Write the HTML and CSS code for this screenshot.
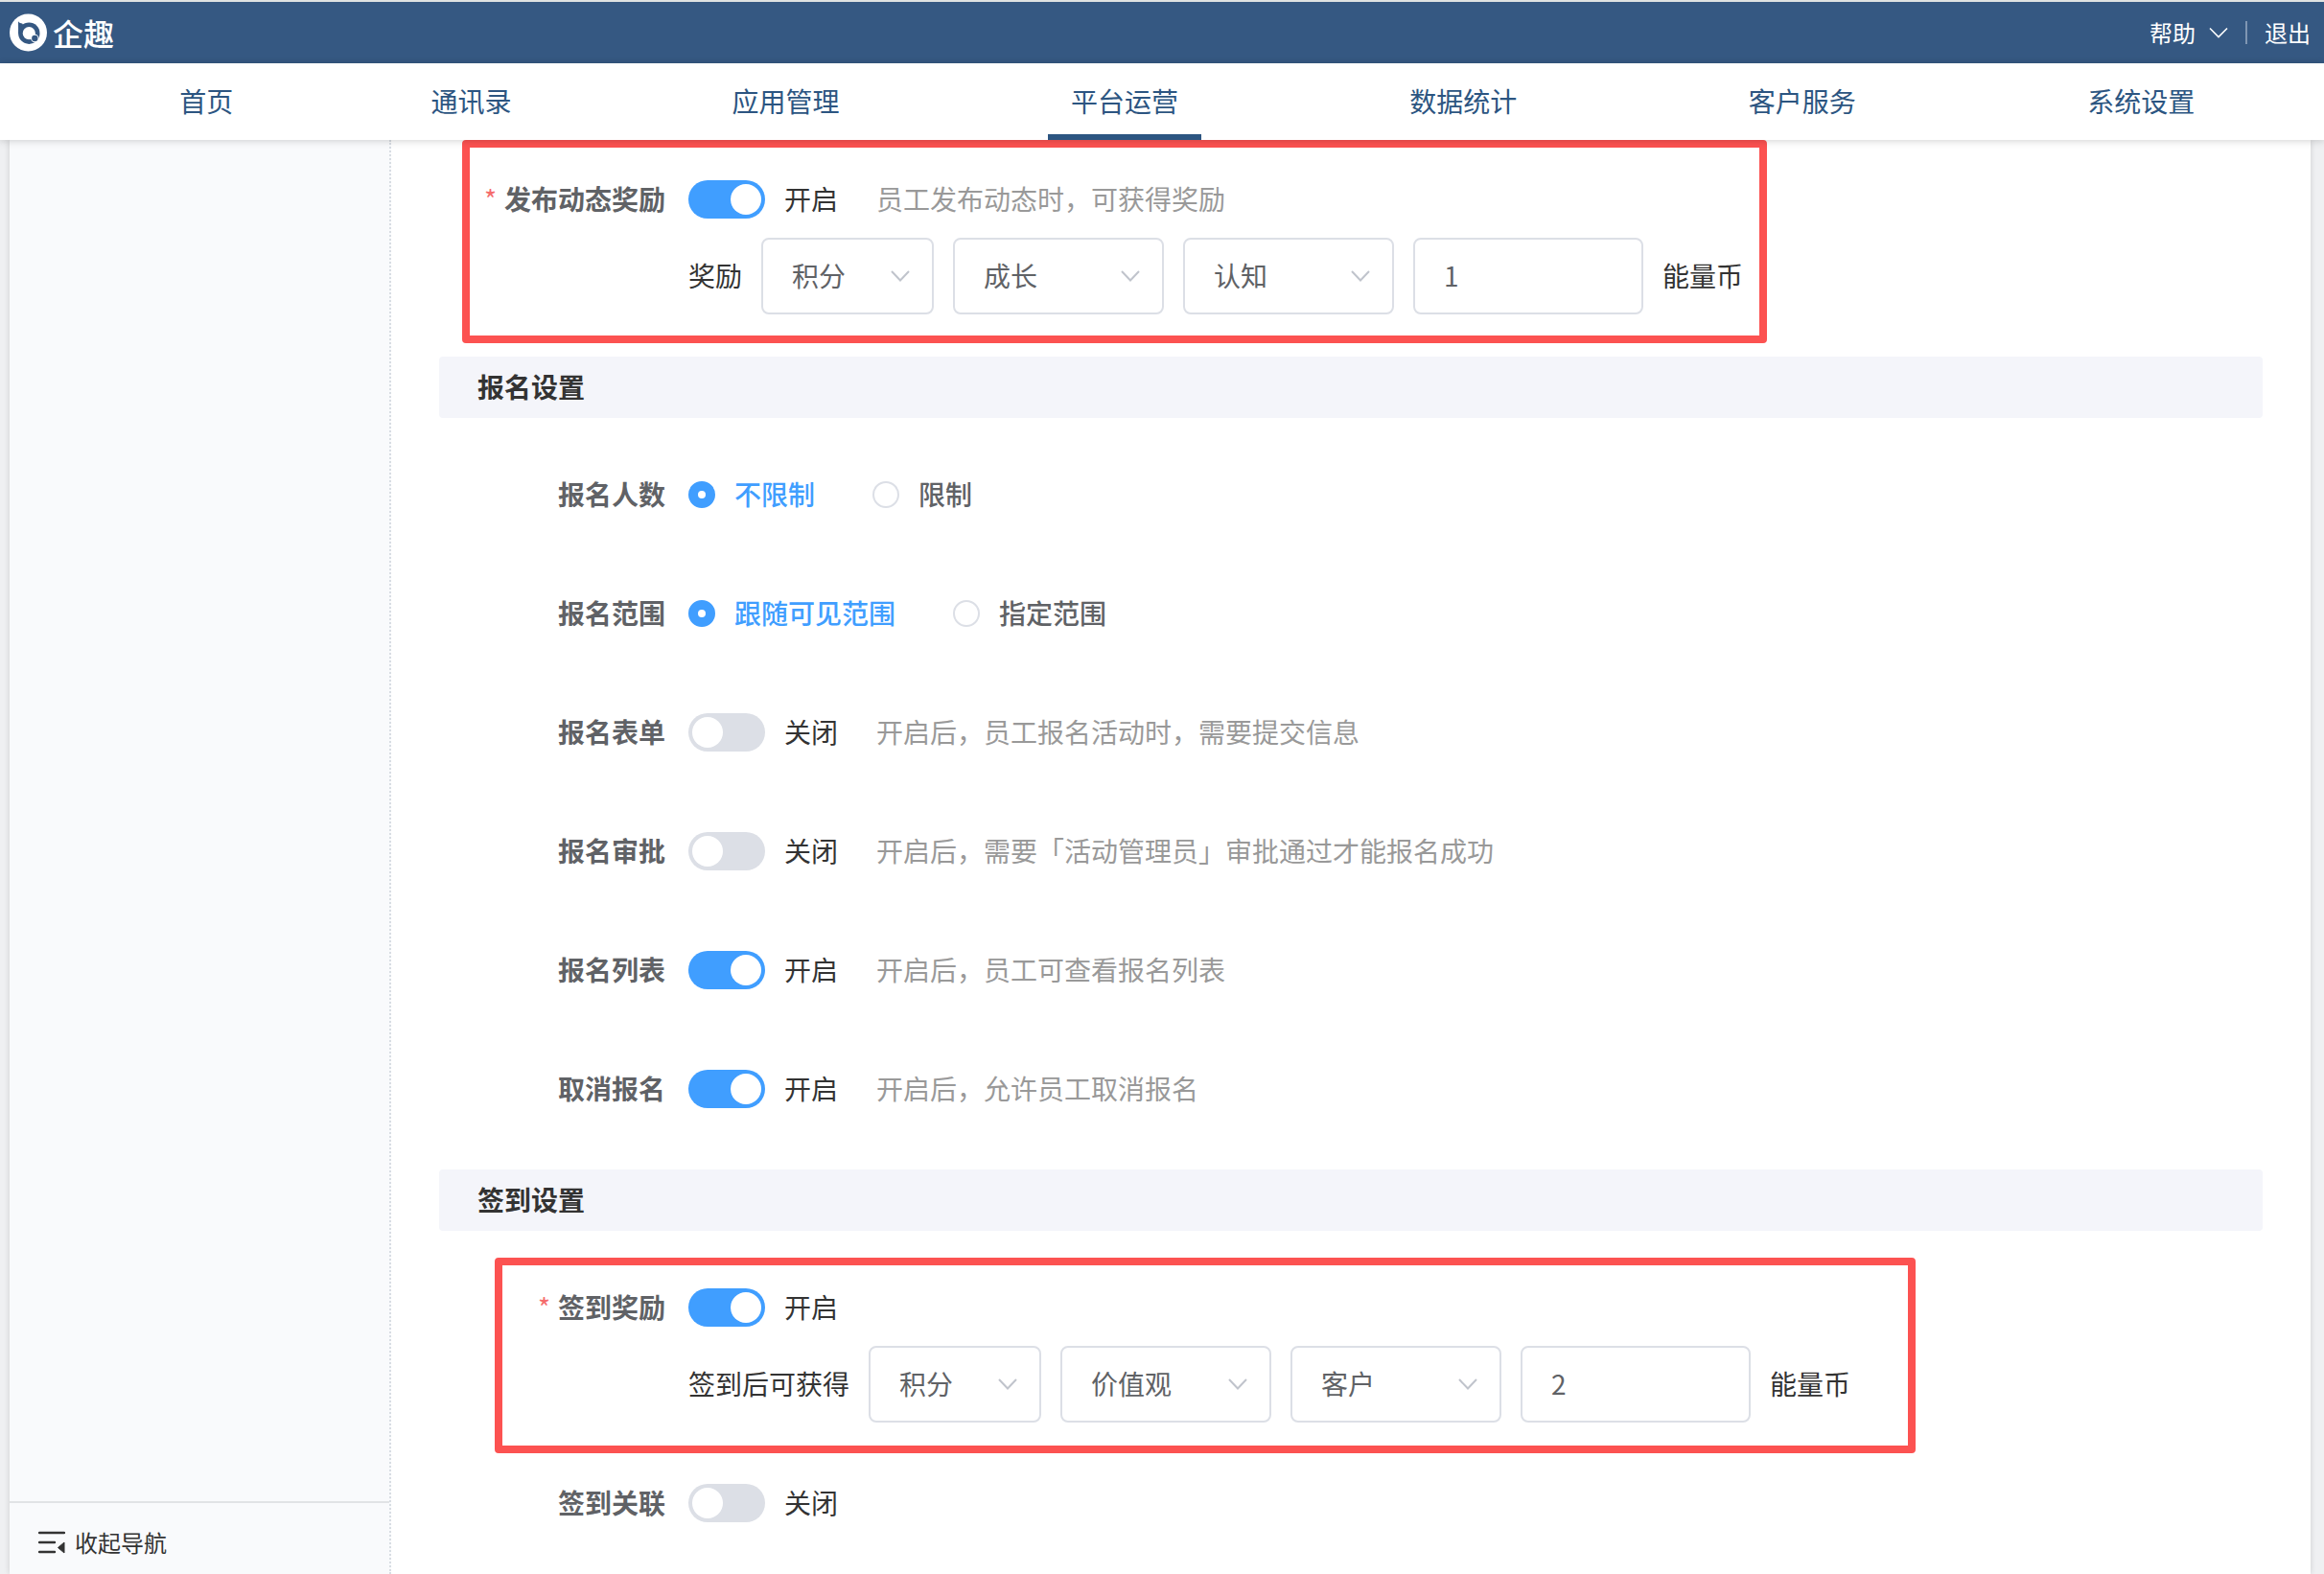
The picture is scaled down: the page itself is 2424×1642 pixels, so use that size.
FILE: index.html
```html
<!DOCTYPE html>
<html lang="zh-CN">
<head>
    <meta charset="UTF-8">
    <meta name="viewport" content="width=device-width, initial-scale=1.0">
    <title>企趣 - 平台运营</title>
    <link rel="stylesheet" href="styles.css">
</head>
<body>
    <header class="topbar">
        <a class="logo" href="#">
            <svg class="logo-icon" viewBox="0 0 40 40" aria-hidden="true">
                <circle cx="20.500" cy="20" r="19.500" fill="#fff"/>
                <circle cx="21.300" cy="20.700" r="11.200" fill="#355882"/>
                <path d="M10 8.300c1 1.500 2.600 2 4.500 2.500L15.500 14l-3 7h-2.400z" fill="#355882"/>
                <circle cx="21.300" cy="20.700" r="6.600" fill="#fff"/>
                <circle cx="27.300" cy="26" r="4.200" fill="#fff"/>
                <circle cx="27.300" cy="26" r="3.200" fill="#355882"/>
            </svg>
            <span class="logo-text">企趣</span>
        </a>
        <div class="topbar-right">
            <button type="button" class="help">
                帮助
                <svg class="help-arrow" viewBox="0 0 20 12" aria-hidden="true"><path d="M1 1.500l9 9 9-9" fill="none" stroke="#fff" stroke-width="1.600"/></svg>
            </button>
            <span class="divider"></span>
            <a class="logout" href="#">退出</a>
        </div>
    </header>

    <nav class="nav">
        <a href="#">首页</a>
        <a href="#">通讯录</a>
        <a href="#">应用管理</a>
        <a class="active" href="#">平台运营</a>
        <a href="#">数据统计</a>
        <a href="#">客户服务</a>
        <a href="#">系统设置</a>
    </nav>

    <div class="container">
        <aside class="sidebar">
            <button type="button" class="collapse">
                <svg class="collapse-icon" viewBox="0 0 28 24" aria-hidden="true">
                    <path d="M1 2h26M1 12h16M1 22h16" fill="none" stroke="#333" stroke-width="2.400" stroke-linecap="round"/>
                    <path d="M20.500 17.500l6.500-5.500v11z" fill="#333" stroke="#333" stroke-linejoin="round"/>
                </svg>
                收起导航
            </button>
        </aside>

        <main class="content">
            <form>
                <div class="item marked marked-post">
                    <label class="item-label required" for="post_reward">发布动态奖励</label>
                    <div class="item-body">
                        <div class="line">
                            <input type="checkbox" class="switch" id="post_reward" checked>
                            <span class="state">开启</span>
                            <span class="hint">员工发布动态时，可获得奖励</span>
                        </div>
                        <div class="line">
                            <span>奖励</span>
                            <span class="select small">
                                <select aria-label="奖励类型"><option>积分</option></select>
                                <svg viewBox="0 0 20 12" aria-hidden="true"><path d="M1 1l9 9.500L19 1"/></svg>
                            </span>
                            <span class="select">
                                <select aria-label="奖励分类"><option>成长</option></select>
                                <svg viewBox="0 0 20 12" aria-hidden="true"><path d="M1 1l9 9.500L19 1"/></svg>
                            </span>
                            <span class="select">
                                <select aria-label="奖励子类"><option>认知</option></select>
                                <svg viewBox="0 0 20 12" aria-hidden="true"><path d="M1 1l9 9.500L19 1"/></svg>
                            </span>
                            <input type="text" class="number" id="post_amount" value="1">
                            <label for="post_amount">能量币</label>
                        </div>
                    </div>
                </div>

                <h2 class="section">报名设置</h2>

                <div class="item" role="radiogroup" aria-labelledby="limit_label">
                    <span class="item-label" id="limit_label">报名人数</span>
                    <div class="line radios">
                        <label class="radio"><input type="radio" name="limit" checked><span>不限制</span></label>
                        <label class="radio"><input type="radio" name="limit"><span>限制</span></label>
                    </div>
                </div>
                <div class="item" role="radiogroup" aria-labelledby="range_label">
                    <span class="item-label" id="range_label">报名范围</span>
                    <div class="line radios">
                        <label class="radio"><input type="radio" name="range" checked><span>跟随可见范围</span></label>
                        <label class="radio"><input type="radio" name="range"><span>指定范围</span></label>
                    </div>
                </div>
                <div class="item">
                    <label class="item-label" for="signup_form">报名表单</label>
                    <div class="line">
                        <input type="checkbox" class="switch" id="signup_form">
                        <span class="state">关闭</span>
                        <span class="hint">开启后，员工报名活动时，需要提交信息</span>
                    </div>
                </div>
                <div class="item">
                    <label class="item-label" for="signup_approve">报名审批</label>
                    <div class="line">
                        <input type="checkbox" class="switch" id="signup_approve">
                        <span class="state">关闭</span>
                        <span class="hint">开启后，需要「活动管理员」审批通过才能报名成功</span>
                    </div>
                </div>
                <div class="item">
                    <label class="item-label" for="signup_list">报名列表</label>
                    <div class="line">
                        <input type="checkbox" class="switch" id="signup_list" checked>
                        <span class="state">开启</span>
                        <span class="hint">开启后，员工可查看报名列表</span>
                    </div>
                </div>
                <div class="item">
                    <label class="item-label" for="signup_cancel">取消报名</label>
                    <div class="line">
                        <input type="checkbox" class="switch" id="signup_cancel" checked>
                        <span class="state">开启</span>
                        <span class="hint">开启后，允许员工取消报名</span>
                    </div>
                </div>

                <h2 class="section">签到设置</h2>

                <div class="item marked marked-checkin">
                    <label class="item-label required" for="checkin_reward">签到奖励</label>
                    <div class="item-body">
                        <div class="line">
                            <input type="checkbox" class="switch" id="checkin_reward" checked>
                            <span class="state">开启</span>
                        </div>
                        <div class="line">
                            <span>签到后可获得</span>
                            <span class="select small">
                                <select aria-label="奖励类型"><option>积分</option></select>
                                <svg viewBox="0 0 20 12" aria-hidden="true"><path d="M1 1l9 9.500L19 1"/></svg>
                            </span>
                            <span class="select">
                                <select aria-label="奖励分类"><option>价值观</option></select>
                                <svg viewBox="0 0 20 12" aria-hidden="true"><path d="M1 1l9 9.500L19 1"/></svg>
                            </span>
                            <span class="select">
                                <select aria-label="奖励子类"><option>客户</option></select>
                                <svg viewBox="0 0 20 12" aria-hidden="true"><path d="M1 1l9 9.500L19 1"/></svg>
                            </span>
                            <input type="text" class="number" id="checkin_amount" value="2">
                            <label for="checkin_amount">能量币</label>
                        </div>
                    </div>
                </div>
                <div class="item">
                    <label class="item-label" for="checkin_link">签到关联</label>
                    <div class="line">
                        <input type="checkbox" class="switch" id="checkin_link">
                        <span class="state">关闭</span>
                    </div>
                </div>
            </form>
        </main>
    </div>
</body>
</html>
```

FILE: styles.css
```css
* {
    box-sizing: border-box;
}
body {
    margin: 0;
    height: 100vh;
    overflow: hidden;
    display: flex;
    flex-direction: column;
    background-color: #eff0f2;
    color: #333;
    font-family: "Noto Sans CJK SC", sans-serif;
    font-size: 28px;
    line-height: 40px;
}
a {
    color: inherit;
    text-decoration: none;
}
button, input, select {
    font: inherit;
    color: inherit;
    margin: 0;
}
button {
    border: none;
    background: none;
    padding: 0;
    cursor: pointer;
}

/* top bar */
.topbar {
    flex: none;
    display: flex;
    justify-content: space-between;
    align-items: center;
    height: 66px;
    padding: 0 14px 0 9px;
    border-top: 2px solid #dfe2e2;
    background-color: #355882;
    color: #fff;
}
.logo {
    display: flex;
    align-items: center;
    gap: 6px;
}
.logo-icon {
    width: 40px;
    height: 40px;
}
.logo-text {
    font-size: 32px;
    font-weight: 500;
}
.topbar-right {
    display: flex;
    align-items: center;
    font-size: 24px;
}
.help {
    display: flex;
    align-items: center;
    gap: 14px;
}
.help-arrow {
    width: 20px;
    height: 12px;
}
.divider {
    width: 2px;
    height: 24px;
    margin: 0 18px;
    background-color: #7f96b2;
}

/* main navigation */
.nav {
    flex: none;
    z-index: 1;
    display: grid;
    grid-template-columns: 250fr 302fr repeat(5, 353fr);
    justify-items: center;
    height: 80px;
    padding: 0 14px 0 90px;
    background-color: #fff;
    box-shadow: 0 1px 8px rgba(0, 0, 0, 0.18);
    color: #2c5581;
}
.nav a {
    padding: 0 24px;
    line-height: 78px;
}
.nav .active {
    box-shadow: inset 0 -6px #2c5581;
}

.container {
    flex: 1;
    min-height: 0;
    display: flex;
    margin: 0 14px 0 10px;
    background-color: #fff;
    box-shadow: 0 0 6px rgba(0, 0, 0, 0.15);
}

/* sidebar */
.sidebar {
    flex: none;
    display: flex;
    flex-direction: column;
    justify-content: flex-end;
    width: 398px;
    border-right: 2px dotted #d8dde3;
    background-color: #f9fafc;
}
.collapse {
    display: flex;
    align-items: center;
    gap: 10px;
    height: 76px;
    padding: 8px 30px 0;
    border-top: 2px solid #e1e3e6;
    font-size: 24px;
}
.collapse-icon {
    width: 28px;
    height: 24px;
}

/* settings form */
.content {
    flex: 1;
    padding: 22px 50px;
}
.section {
    height: 64px;
    margin: 0 0 40px;
    padding: 0 40px;
    border-radius: 4px;
    background-color: #f4f5fa;
    font-size: 28px;
    font-weight: 700;
    line-height: 62px;
}
.item {
    display: flex;
    width: fit-content;
    margin-bottom: 44px;
}
.item-label {
    width: 260px;
    padding-right: 24px;
    color: #606266;
    font-weight: 700;
    line-height: 78px;
    text-align: right;
}
.required::before {
    content: "*";
    margin-right: 8px;
    color: #f56c6c;
    font-weight: 400;
}
.line {
    display: flex;
    align-items: center;
    gap: 20px;
    height: 80px;
}
.line > span, .line > label, .radio span {
    line-height: 38px;
    padding-bottom: 2px;
}
.hint {
    margin-left: 20px;
    color: #999;
}

.switch {
    appearance: none;
    width: 80px;
    height: 40px;
    padding: 4px;
    border-radius: 20px;
    background-color: #dcdfe6;
    cursor: pointer;
}
.switch::before {
    content: "";
    display: block;
    width: 32px;
    height: 32px;
    border-radius: 50%;
    background-color: #fff;
}
.switch:checked {
    background-color: #409eff;
}
.switch:checked::before {
    margin-left: auto;
}

.radios {
    gap: 60px;
}
.line > .radio {
    display: flex;
    align-items: center;
    gap: 20px;
    padding: 0;
    color: #606266;
    font-weight: 500;
    cursor: pointer;
}
.radio input {
    appearance: none;
    width: 28px;
    height: 28px;
    border: 2px solid #dcdfe6;
    border-radius: 50%;
    background-color: #fff;
}
.radio input:checked {
    border: 10px solid #409eff;
}
.radio input:checked + span {
    color: #409eff;
}

/* arrow shares the grid cell with its select */
.line > .select {
    display: grid;
    align-items: center;
    width: 220px;
    padding: 0;
}
.line > .small {
    width: 180px;
}
.select select, .select svg {
    grid-area: 1 / 1;
}
.select select, .number {
    appearance: none;
    width: 100%;
    height: 80px;
    padding: 0 30px 2px;
    border: 2px solid #dcdfe6;
    border-radius: 8px;
    background-color: #fff;
    color: #606266;
}
.select svg {
    justify-self: end;
    width: 20px;
    height: 12px;
    margin-right: 25px;
    fill: none;
    stroke: #c0c4cc;
    stroke-width: 2;
    pointer-events: none;
}
.number {
    width: 240px;
}

/* red frames drawn over the form */
.marked {
    position: relative;
}
.marked::before {
    content: "";
    position: absolute;
    border: 8px solid #fc5251;
    border-radius: 4px;
    pointer-events: none;
}
.marked-post::before {
    inset: -22px -25px -30px 24px;
}
.marked-checkin::before {
    inset: -12px -68px -32px 58px;
}
```
